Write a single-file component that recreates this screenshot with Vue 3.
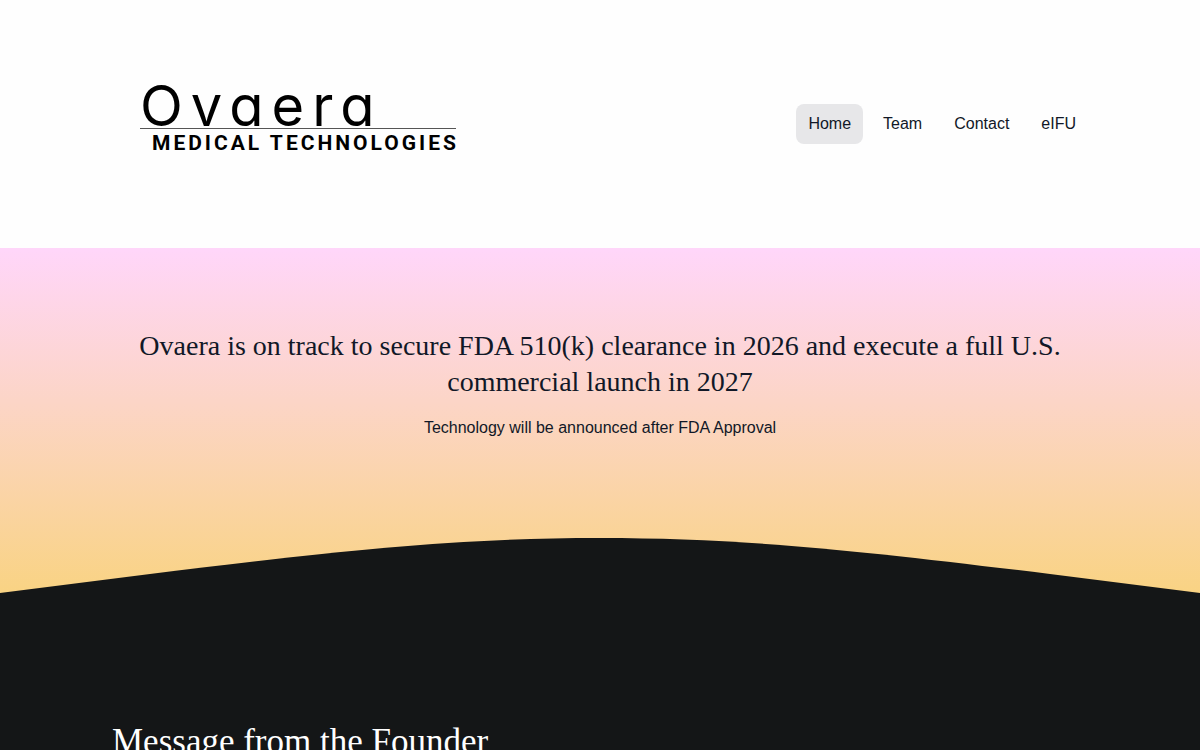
<script setup>
const links = [
  { label: 'Home', href: '#home', active: true },
  { label: 'Team', href: '#team' },
  { label: 'Contact', href: '#contact' },
  { label: 'eIFU', href: '#eifu' },
]
</script>

<template>
  <div class="page">
    <header class="header">
      <a class="logo" href="#home">
        <span class="logo-name">Ovaera</span>
        <span class="logo-tag">MEDICAL TECHNOLOGIES</span>
      </a>
      <nav class="nav">
        <a
          v-for="link in links"
          :key="link.label"
          :href="link.href"
          class="nav-link"
          :class="{ active: link.active }"
        >{{ link.label }}</a>
      </nav>
    </header>
    <main>
      <section class="hero">
        <h1>Ovaera is on track to secure FDA 510(k) clearance in 2026 and execute a full U.S. commercial launch in 2027</h1>
        <p>Technology will be announced after FDA Approval</p>
        <svg class="curve" viewBox="0 0 1200 56" preserveAspectRatio="none" aria-hidden="true">
          <path d="M0 55 L150 36 C330 14 450 0 600 0 C750 0 870 14 1050 36 L1200 55 V56 H0 Z" />
        </svg>
      </section>
      <section class="message">
        <h2>Message from the Founder</h2>
      </section>
    </main>
  </div>
</template>

<style>
html {
  scrollbar-width: none;
}
body {
  margin: 0;
  background: #141617;
}
</style>

<style scoped>
.page {
  min-height: 100vh;
  font: 16px/24px "Liberation Sans", Arial, sans-serif;
  color: #111827;
}
.header {
  display: flex;
  align-items: center;
  justify-content: space-between;
  box-sizing: border-box;
  min-height: 248px;
  padding: 0 112px;
  background: #fefefe;
}
.logo {
  display: flex;
  flex-direction: column;
  margin-left: 28px;
  padding-bottom: 14px;
  color: #000;
  text-decoration: none;
  white-space: nowrap;
}
.logo-name {
  padding-top: 4px;
  font: 400 56px/44px Inter, sans-serif;
  font-feature-settings: "cv11";
  letter-spacing: 8px;
  border-bottom: 1px solid #555;
}
.logo-tag {
  padding: 2px 0 0 12px;
  margin-right: -3px;
  font: 700 21px/24px Roboto, sans-serif;
  letter-spacing: 3px;
}
.nav {
  display: flex;
  gap: 8px;
}
.nav-link {
  padding: 8px 12px;
  border-radius: 8px;
  color: #111827;
  text-decoration: none;
}
.nav-link.active {
  background: #e7e7e9;
}
.hero {
  display: flex;
  flex-direction: column;
  align-items: center;
  padding-top: 80px;
  text-align: center;
  background: linear-gradient(180deg, #ffd6fa 0%, #fcd5c6 45%, #f9d383 100%);
}
h1 {
  margin: 0;
  padding: 0 112px;
  font: 400 28px/36px "Liberation Serif", "Times New Roman", serif;
}
p {
  margin: 16px 0 98px;
}
.curve {
  display: block;
  width: 100%;
  height: 56px;
  fill: #141617;
}
.message {
  padding: 126px 112px 80px;
  background: #141617;
  color: #fff;
}
h2 {
  margin: 0;
  font: 400 35px/44px "Liberation Serif", "Times New Roman", serif;
}
</style>
